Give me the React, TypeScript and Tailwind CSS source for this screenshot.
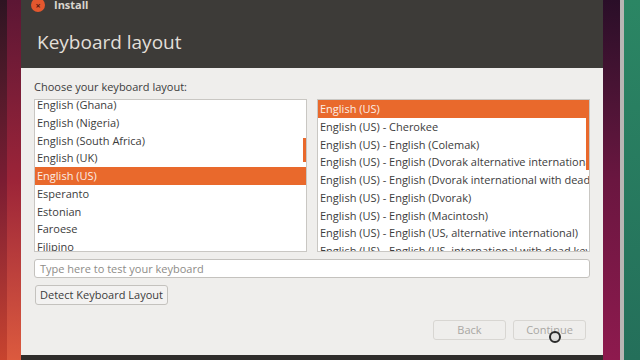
import React from 'react'

const font = { fontFamily: '"Open Sans", "DejaVu Sans", sans-serif' }

const layouts = [
  'English (Ghana)',
  'English (Nigeria)',
  'English (South Africa)',
  'English (UK)',
  'English (US)',
  'Esperanto',
  'Estonian',
  'Faroese',
  'Filipino',
]

const variants = [
  'English (US)',
  'English (US) - Cherokee',
  'English (US) - English (Colemak)',
  'English (US) - English (Dvorak alternative international no dead keys)',
  'English (US) - English (Dvorak international with dead keys)',
  'English (US) - English (Dvorak)',
  'English (US) - English (Macintosh)',
  'English (US) - English (US, alternative international)',
  'English (US) - English (US, international with dead keys)',
]

function ListBox({
  items,
  selected,
  offset,
  thumb,
}: {
  items: string[]
  selected: string
  offset: string
  thumb: string
}) {
  return (
    <div className="relative flex-1 h-[153px] bg-white border border-[#c9c7c3] overflow-hidden">
      <div className={offset}>
        {items.map((item) => (
          <div
            key={item}
            className={
              'h-[17.75px] leading-[17.75px] pl-[2px] whitespace-nowrap text-[11px] ' +
              (item === selected ? 'bg-[#e9692c] text-[#fbeee6]' : 'text-[#3c3c3c]')
            }
          >
            {item}
          </div>
        ))}
      </div>
      <div className={'absolute right-0 w-[3px] bg-[#e9692c] ' + thumb} />
    </div>
  )
}

export default function App() {
  return (
    <div className="relative flex w-[640px] h-[360px] overflow-hidden" style={font}>
      {/* desktop, left */}
      <div className="w-[21px] h-full flex">
        <div className="w-[7px] h-full bg-gradient-to-b from-[#2e1422] via-[#7a1c32] to-[#c8442e]" />
        <div className="flex-1 h-full bg-gradient-to-b from-[#5c1634] via-[#9c2438] to-[#dc5a3e]" />
      </div>

      {/* window */}
      <div className="w-[582px] h-full flex flex-col bg-[#efeeec]">
        <div className="h-[68px] bg-[#3d3b38] px-[10px]">
          <div className="flex items-center gap-[9px] -mt-[3px] h-[16px]">
            <div className="w-[14px] h-[14px] rounded-full bg-[#e4572e] flex items-center justify-center">
              <span className="text-[9px] leading-none text-[#5a1a10] font-bold">×</span>
            </div>
            <span className="text-[11px] font-bold text-[#d9d6cf]">Install</span>
          </div>
          <div className="mt-[17px] pl-[6px] text-[19px] leading-[24px] text-[#e2dfd8]">Keyboard layout</div>
        </div>

        <div className="flex-1 flex flex-col px-[13px]">
          <div className="mt-[12px] text-[11px] leading-[14px] text-[#3c3c3c]">Choose your keyboard layout:</div>
          <div className="mt-[5px] flex gap-[10px]">
            <ListBox items={layouts} selected="English (US)" offset="-mt-[4px]" thumb="top-[38px] h-[24px]" />
            <ListBox items={variants} selected="English (US)" offset="mt-0" thumb="top-0 h-[70px]" />
          </div>
          <div className="mt-[7px] h-[19px] rounded-[3px] border border-[#c4c2be] bg-white px-[5px] text-[11px] leading-[17px] text-[#8e8c88]">
            Type here to test your keyboard
          </div>
          <div className="mt-[7px] ml-[1px] w-[133px] h-[20px] rounded-[3px] border border-[#c4c2be] bg-[#f3f2f1] text-[11px] leading-[18px] text-[#3c3c3c] text-center">
            Detect Keyboard Layout
          </div>
          <div className="mt-[15px] flex justify-end gap-[7px] pr-[4px]">
            <div className="w-[73px] h-[20px] rounded-[3px] border border-[#d8d6d2] text-[11px] leading-[18px] text-[#a9a7a3] text-center">
              Back
            </div>
            <div className="w-[73px] h-[20px] rounded-[3px] border border-[#d8d6d2] text-[11px] leading-[18px] text-[#a9a7a3] text-center">
              Continue
            </div>
          </div>
          <div className="flex-1" />
        </div>
        <div className="h-[5px] bg-[#2f2d2b]" />
      </div>

      {/* desktop, right */}
      <div className="w-[17px] h-full bg-gradient-to-b from-[#2a0e28] via-[#6a1640] to-[#8e1a4e]" />
      <div className="w-[4px] h-full bg-[#b8b6b4]" />
      <div className="flex-1 h-full bg-gradient-to-b from-[#2b8664] to-[#246f5a]" />

      {/* mouse cursor */}
      <div className="absolute left-[549px] top-[331px] w-[12px] h-[12px] rounded-full border-[2px] border-[#2a2a2a] bg-[#d8d8d8]/60" />
    </div>
  )
}
